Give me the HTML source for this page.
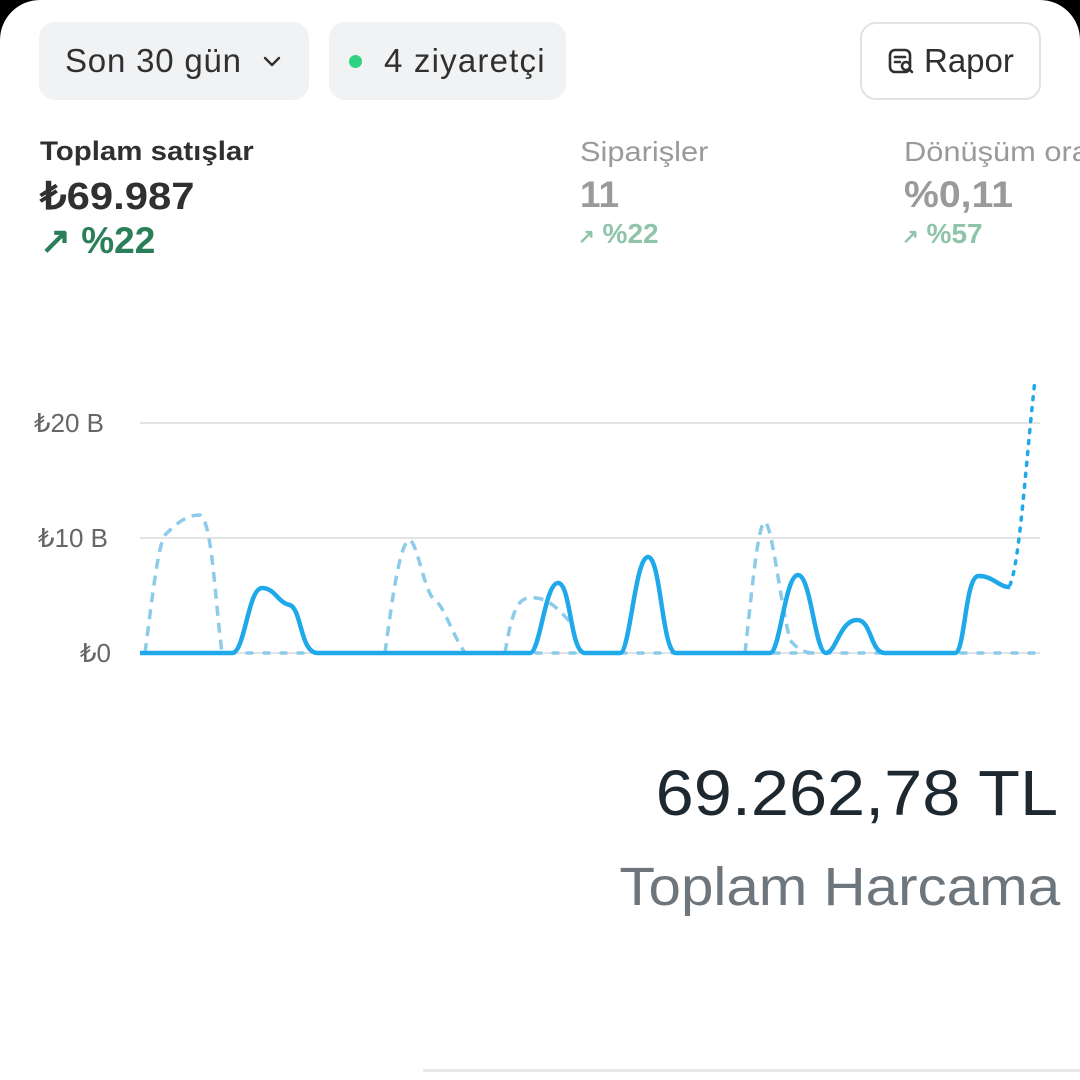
<!DOCTYPE html>
<html><head><meta charset="utf-8"><style>
*{margin:0;padding:0;box-sizing:border-box}
body{width:1080px;height:1080px;background:#000;font-family:"Liberation Sans",sans-serif;overflow:hidden;position:relative}
.card{position:absolute;left:0;top:0;width:1080px;height:1080px;background:#fff;border-radius:40px 40px 0 0}
.pill{position:absolute;top:22px;height:78px;border-radius:16px;background:#f1f2f4;font-size:33px;color:#303030;display:flex;align-items:center}
.t{position:absolute;white-space:nowrap}
.sx{display:inline-block;transform-origin:left center}
</style></head><body><div class="card">
<div class="pill" style="left:39px;width:270px;padding-left:26px;letter-spacing:0.8px">Son 30 gün
<svg width="24" height="24" viewBox="0 0 24 24" style="margin-left:18px"><path d="M5 9l7 7 7-7" fill="none" stroke="#303030" stroke-width="2.4" stroke-linecap="round" stroke-linejoin="round"/></svg></div>
<div class="pill" style="left:329px;width:237px;padding-left:20px;letter-spacing:1.2px"><span style="width:13px;height:13px;border-radius:50%;background:#2fd27e;display:inline-block;margin-right:22px"></span>4 ziyaretçi</div>
<div class="pill" style="left:860px;width:181px;background:#fff;border:2px solid #e2e2e2;padding-left:24px">
<svg width="30" height="30" viewBox="0 0 30 30" style="margin-right:8px"><rect x="4" y="4" width="20" height="22" rx="5" fill="none" stroke="#303030" stroke-width="2.6"/><path d="M9 11h10M9 16h5" stroke="#303030" stroke-width="2.6" stroke-linecap="round"/><circle cx="20" cy="20" r="4" fill="#fff" stroke="#303030" stroke-width="2.6"/><path d="M23 23l3 3" stroke="#303030" stroke-width="2.6" stroke-linecap="round"/></svg>Rapor</div>

<div class="t" style="left:40px;top:136px;font-size:27px;font-weight:bold;color:#303030"><span class="sx" style="transform:scaleX(1.09)">Toplam satışlar</span></div>
<div class="t" style="left:40px;top:174px;font-size:38px;font-weight:bold;color:#303030"><span class="sx" style="transform:scaleX(1.1)">₺69.987</span></div>
<div class="t" style="left:40px;top:219px;font-size:37px;font-weight:bold;color:#2a7f58">↗ %22</div>

<div class="t" style="left:580px;top:136px;font-size:28px;color:#9a9a9a"><span class="sx" style="transform:scaleX(1.1)">Siparişler</span></div>
<div class="t" style="left:580px;top:174px;font-size:37px;font-weight:bold;color:#9a9a9a">11</div>
<div class="t" style="left:578px;top:218px;font-size:28px;font-weight:bold;color:#8fc4aa"><span style="font-size:20px">↗</span> %22</div>

<div class="t" style="left:904px;top:136px;font-size:28px;color:#9a9a9a"><span class="sx" style="transform:scaleX(1.1)">Dönüşüm oranı</span></div>
<div class="t" style="left:904px;top:174px;font-size:37px;font-weight:bold;color:#9a9a9a"><span class="sx" style="transform:scaleX(1.06)">%0,11</span></div>
<div class="t" style="left:902px;top:218px;font-size:28px;font-weight:bold;color:#8fc4aa"><span style="font-size:20px">↗</span> %57</div>

<div class="t" style="left:34px;top:408px;font-size:26px;color:#666">₺20 B</div>
<div class="t" style="left:38px;top:523px;font-size:26px;color:#666">₺10 B</div>
<div class="t" style="left:80px;top:638px;font-size:26px;color:#666">₺0</div>

<svg width="1080" height="1080" style="position:absolute;left:0;top:0">
<path d="M140 423H1040M140 538H1040M140 653H1040" stroke="#e3e3e3" stroke-width="2"/>
<path d="M145 653C152 600 158 545 165 535C175 525 185 515 200 515C212 520 215 600 222 653M385 653C392 600 400 540 410 540C418 545 425 595 435 600C445 608 450 630 465 653M505 653C512 610 518 600 528 598C545 596 555 605 570 622M745 653C752 590 758 522 765 522C772 525 780 600 790 640C798 650 805 653 815 653" fill="none" stroke="#8ccbe9" stroke-width="3.5" stroke-dasharray="10 7"/>
<path d="M230 653H1040" fill="none" stroke="#8ccbe9" stroke-width="3.5" stroke-dasharray="5 12" stroke-linecap="round"/>
<path d="M140 653H232C245 653 248 588 262 588C275 588 278 603 290 605C302 610 300 653 318 653H530C540 653 545 583 558 583C571 583 570 653 585 653H620C630 653 635 557 648 557C661 557 662 653 676 653H770C780 653 785 575 798 575C811 575 815 653 826 653C836 653 840 620 857 620C872 620 870 653 885 653H955C965 653 965 578 978 576C992 575 1000 588 1010 587" fill="none" stroke="#1fa9ea" stroke-width="4.5" stroke-linejoin="round"/>
<path d="M1010 585C1020 560 1025 470 1035 380" fill="none" stroke="#1fa9ea" stroke-width="3.5" stroke-dasharray="3 8" stroke-linecap="round"/>
</svg>

<div class="t" style="right:22px;top:756px;font-size:64px;color:#1d2830"><span class="sx" style="transform:scaleX(1.07);transform-origin:right center">69.262,78 TL</span></div>
<div class="t" style="right:20px;top:856px;font-size:54px;color:#6e767d"><span class="sx" style="transform:scaleX(1.08);transform-origin:right center">Toplam Harcama</span></div>
<div style="position:absolute;left:423px;top:1069px;width:657px;height:3px;background:#e8e8e8"></div>
</div></body></html>
